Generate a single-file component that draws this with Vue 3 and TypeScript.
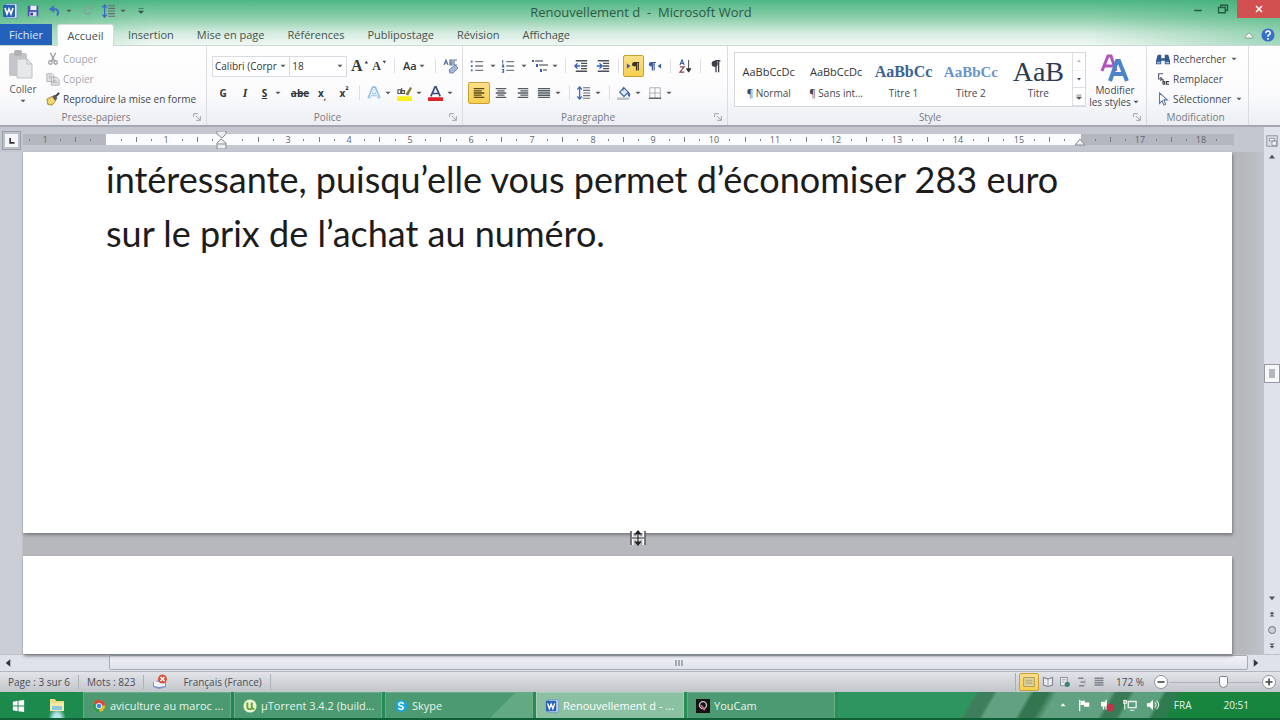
<script setup lang="ts">
import { h, ref } from 'vue'

const glyphs: Record<string, string> = {
  word: '<rect x="4" y="1" width="11" height="14" fill="#e8f0fb" stroke="#6a92c8"/><rect x="1" y="2" width="12" height="12" rx="1" fill="#2b62b5"/><path d="M3 5l2 6 2-5 2 5 2-6" fill="none" stroke="#fff" stroke-width="1.6"/>',
  save: '<path d="M2 2h12v12H2z" fill="#4453b5"/><path d="M5 2h7v5H5z" fill="#e9ebfa"/><path d="M4 9h8v5H4z" fill="#d9dcf0"/><path d="M5 10h3v3H5z" fill="#303a86"/>',
  undo: '<path d="M5 6h4a4 4 0 0 1 1 7" fill="none" stroke="#3f6fc6" stroke-width="2.4"/><path d="M1 6l6-5v9z" fill="#3f6fc6"/>',
  redo: '<path d="M12 9a4.500 4.500 0 1 1-2-5" fill="none" stroke="#7fa898" stroke-width="2.200"/><path d="M8 6h6V1z" fill="#7fa898"/>',
  spacing: '<path d="M3 1v14M0.500 4L3 1l2.500 3M.5 12L3 15l2.500-3" fill="none" stroke="#3a6cc0" stroke-width="1.500"/><path d="M7 2h8M7 5h8M7 8h8M7 11h8M7 14h8" stroke="#666b75" stroke-width="1.400"/>',
  caret: '<path d="M4 6h8l-4 4z" fill="#555"/>',
  customize: '<path d="M4 4h8M4 8h8l-4 4z" fill="#33564a" stroke="#33564a"/>',
  paste: '<rect x="1" y="4" width="18" height="23" rx="2" fill="#c3c5c8"/><rect x="6" y="1" width="8" height="6" rx="2" fill="#b0b2b5"/><path d="M9 10h10l5 5v14H9z" fill="#e6e7e9" stroke="#bfc1c4"/><path d="M19 10v5h5" fill="none" stroke="#bfc1c4"/>',
  cut: '<path d="M5 1l5 10M11 1L6 11" stroke="#9fa2a6" stroke-width="1.600"/><circle cx="5" cy="12" r="2" fill="none" stroke="#9fa2a6" stroke-width="1.500"/><circle cx="11" cy="12" r="2" fill="none" stroke="#9fa2a6" stroke-width="1.500"/>',
  copy: '<path d="M1 2h6l2 2v7H1zM6 6h6l3 3v6H6z" fill="#e4e5e7" stroke="#a9abb0"/><path d="M8 10h4M8 12h5M3 5h3M3 7h2" stroke="#a9abb0"/>',
  brush: '<path d="M1 8l6-3 4 5-4 5-5-1z" fill="#f0cf62" stroke="#a58428"/><path d="M7 5l3-2 3 4-2 3z" fill="#555c68"/><path d="M11 5l4-4" stroke="#3d4046" stroke-width="2.400"/><path d="M3 9l3 4M6 8l3 4" stroke="#fff0a8"/>',
  launch: '<path d="M2 6V2h5M5 5l5 5M10 5v5H5" fill="none" stroke="#a0a3aa" stroke-width="1.200"/>',
  grow: '<path d="M11 5l2-3 2 3z" fill="#345" />',
  shrink: '<path d="M11 2h4l-2 3z" fill="#345"/>',
  clear: '<path d="M1 7l2-5 2 5M2 5h2M7 2v5h2V5H7h2V2zM14 2h-3v5h3" fill="none" stroke="#56709a" stroke-width="1.200"/><path d="M6 12l6-5 3 3-5 5H7z" fill="#a7b5e1" stroke="#7683b8"/>',
  bullets: '<path d="M6 3h9M6 8h9M6 13h9" stroke="#777c84" stroke-width="1.600"/><path d="M1 2h2v2H1zM1 7h2v2H1zM1 12h2v2H1z" fill="#3d5da8"/>',
  numbers: '<path d="M6 3h9M6 8h9M6 13h9" stroke="#777c84" stroke-width="1.600"/><path d="M2 1v4M1 7h2v2H1M1 12h2v3H1" fill="none" stroke="#3d5da8" stroke-width="1.200"/>',
  levels: '<path d="M3 3h8M7 7h9M11 12h4" stroke="#777c84" stroke-width="1.500"/><path d="M0 2h2v2H0zM4 6h2v3H4zM8 11h2v3H8z" fill="#3d5da8"/>',
  outdent: '<path d="M2 2h13M8 5h7M8 8h7M8 11h7M2 14h13" stroke="#4a4f58" stroke-width="1.500"/><path d="M7 8H2M4 5L1 8l3 3" fill="none" stroke="#2f5dbb" stroke-width="1.600"/>',
  indent: '<path d="M2 2h13M8 5h7M8 8h7M8 11h7M2 14h13" stroke="#4a4f58" stroke-width="1.500"/><path d="M1 8h5M4 5l3 3-3 3" fill="none" stroke="#2f5dbb" stroke-width="1.600"/>',
  ltr: '<path d="M1 5l4 3-4 3z" fill="#4b56b0"/><path d="M12 4v9M14 4v9M15 4H9" stroke="#3b3420" stroke-width="1.400"/><circle cx="9.500" cy="6" r="2.500" fill="#3b3420"/>',
  rtl: '<path d="M15 5l-4 3 4 3z" fill="#3d5da8"/><path d="M5 4v9M7 4v9M9 4H3" stroke="#3d5da8" stroke-width="1.400"/><circle cx="3.500" cy="6" r="2.500" fill="#3d5da8"/>',
  sort: '<path d="M1 7l2.500-6L6 7M2 5h3" fill="none" stroke="#3d5da8" stroke-width="1.300"/><path d="M1 9h5l-5 6h5" fill="none" stroke="#98404c" stroke-width="1.300"/><path d="M11 1v13M8.500 11l2.500 4 2.500-4z" stroke="#333" fill="#333"/>',
  pilcrow: '<path d="M8 2v13M11 2v13M13 2H7" stroke="#3d4046" stroke-width="1.500"/><circle cx="6.500" cy="5.500" r="3.500" fill="#3d4046"/>',
  left: '<path d="M2 3h12M2 5.500h9M2 8h12M2 10.500h9M2 13h12" stroke="#5b4a16" stroke-width="1.500"/>',
  center: '<path d="M2 3h12M4 5.500h8M2 8h12M4 10.500h8M2 13h12" stroke="#555a62" stroke-width="1.500"/>',
  right: '<path d="M2 3h12M5 5.500h9M2 8h12M5 10.500h9M2 13h12" stroke="#555a62" stroke-width="1.500"/>',
  justify: '<path d="M1 3h14M1 5.500h14M1 8h14M1 10.500h14M1 13h14" stroke="#555a62" stroke-width="1.600"/>',
  bucket: '<path d="M3 7l5-5 5 5-5 5z" fill="#dfe7f5" stroke="#3c5fa0" stroke-width="1.300"/><path d="M7 5V1M13 7q3 2 1 5-2-1-1-5" fill="#3d6fc4" stroke="#3c5fa0"/><path d="M0 13h14v3H0z" fill="#bfc4cc"/>',
  borders: '<path d="M2 2h12v12H2zM8 2v12M2 8h12" fill="none" stroke="#a3a7ae"/><path d="M1 14h14" stroke="#555a62" stroke-width="1.500"/>',
  effect: '<path d="M2 14L7 2h2l5 12M4 10h8" fill="none" stroke="#8fc0e8" stroke-width="3.400"/><path d="M3 13L7.500 3h1L13 13M5 10h6" fill="none" stroke="#f4faff" stroke-width="1.200"/>',
  marker: '<path d="M0 11h16v5H0z" fill="#f6f21a"/><path d="M1 4h3v4H1zM5 2v6h3V5H5" fill="none" stroke="#555" stroke-width="1.300"/><path d="M9 9l5-8 2 1-4 8z" fill="#8a7a30"/>',
  fontcolor: '<path d="M3 11L7.500 1h1L13 11M5 8h6" fill="none" stroke="#394b80" stroke-width="1.800"/><path d="M0 12h16v4H0z" fill="#e0202c"/>',
  styles: '<path d="M2 17L8 2h3l5 15M4 12h10" fill="none" stroke="#b155bd" stroke-width="3"/><path d="M10 27L17 7h2l8 20M13 20h11" fill="none" stroke="#4b84c9" stroke-width="4"/>',
  find: '<path d="M2 3h4v4h4V3h4l2 7v4h-6v-4H6v4H0v-4z" fill="#33598f"/><path d="M1 11h4v2H1zM11 11h4v2h-4z" fill="#9dbbe2"/>',
  replace: '<path d="M8 2H3v6h4M5 6l2 2-2 2" fill="none" stroke="#555a62" stroke-width="1.300"/><path d="M8 8v6M8 11h2v3H8M15 11h-3v3h3" fill="none" stroke="#3c4048" stroke-width="1.300"/>',
  select: '<path d="M4 1v12l3-3 2 5 2-1-2-5h4z" fill="#fff" stroke="#5975a8" stroke-width="1.200"/>',
  min: '<path d="M3 10h10" stroke="#245b41" stroke-width="2"/>',
  restore: '<path d="M5 6V3h9v7h-3M2 6h9v7H2z" fill="none" stroke="#245b41" stroke-width="1.800"/>',
  close: '<path d="M4 4l8 8M12 4l-8 8" stroke="#fff" stroke-width="2"/>',
  collapse: '<path d="M3 10l5-5 5 5v2H3z" fill="#f5faf8" stroke="#6c8b80"/>',
  help: '<circle cx="8" cy="8" r="7.500" fill="#386fcc"/><path d="M5.500 6q0-2.500 2.500-2.500T10.500 6Q10.500 7.500 8 8.500V10" fill="none" stroke="#fff" stroke-width="1.800"/><path d="M7 11.500h2v2H7z" fill="#fff"/>',
  up: '<path d="M4 10h8L8 5z" fill="#4a4f5a"/>',
  down: '<path d="M4 6h8l-4 5z" fill="#4a4f5a"/>',
  tip: '<path d="M4 10h8L8 5z" fill="#fff"/>',
  back: '<path d="M11 3v10L5 8z" fill="#33363d"/>',
  forward: '<path d="M5 3v10l6-5z" fill="#33363d"/>',
  more: '<path d="M4 5h8M4 8h8l-4 4z" fill="#555" stroke="#555"/>',
  previous: '<path d="M4 8l4-4 4 4zM4 12l4-4 4 4z" fill="#555a66"/>',
  next: '<path d="M4 4l4 4 4-4zM4 8l4 4 4-4z" fill="#555a66"/>',
  browse: '<circle cx="8" cy="8" r="4.500" fill="#cdd1da" stroke="#868b96" stroke-width="1.500"/>',
  ruler: '<path d="M2 2h12v12H2z" fill="#d8dbe2" stroke="#898e99"/><path d="M5 5h6v3H5zM8 8h5v5H8z" fill="#f5f6f8" stroke="#898e99"/>',
  tabstop: '<path d="M5 3v8h7" fill="none" stroke="#333" stroke-width="2.600"/>',
  proof: '<path d="M1 8l6-2 7 2v5l-7 2-6-2z" fill="#7c93c8"/><path d="M2 7l5 1 6-1v5l-6 1-5-1z" fill="#f0f3fb"/><circle cx="10.500" cy="5" r="4.500" fill="#d4543e"/><path d="M8.500 3l4 4M12.500 3l-4 4" stroke="#fff" stroke-width="1.500"/>',
  print: '<path d="M2 3h12v10H2z" fill="#e9dda6" stroke="#9c8d55"/><path d="M4 6h8M4 8h8M4 10h8" stroke="#a99a65"/>',
  read: '<path d="M8 4L2 2v10l6 2 6-2V2z" fill="#eceef2" stroke="#7f848e" stroke-width="1.500"/><path d="M8 4v10" stroke="#7f848e"/>',
  web: '<path d="M2 2h9v11H2z" fill="#e9ebef" stroke="#8b9099" stroke-width="1.300"/><circle cx="11" cy="11" r="3.500" fill="#3c8277"/><path d="M4 5h5M4 8h3" stroke="#8b9099"/>',
  outline: '<path d="M3 3h7M6 8h6M4 13h7" stroke="#7f848e" stroke-width="2"/><path d="M12 4v8" stroke="#a6aab2"/>',
  draft: '<path d="M2 3h12M2 6h12M2 9h12M2 12h12" stroke="#7f848e" stroke-width="1.800"/>',
  minus: '<circle cx="8" cy="8" r="6.500" fill="#fdfdfe" stroke="#8f949e"/><path d="M4.500 8h7" stroke="#444" stroke-width="1.600"/>',
  plus: '<circle cx="8" cy="8" r="6.500" fill="#fdfdfe" stroke="#8f949e"/><path d="M4.500 8h7M8 4.500v7" stroke="#444" stroke-width="1.600"/>',
  start: '<path d="M2 4l5-1v5H2zM8 3l6-1v6H8zM2 9h5v5l-5-1zM8 9h6v6l-6-1z" fill="#fff"/>',
  explorer: '<path d="M1 2h5l1 2h8v4H1z" fill="#f2dd84"/><path d="M1 6h14v8H1z" fill="#f7eaa8"/><path d="M3 9h10v4H3z" fill="#8cc6dc"/>',
  chrome: '<circle cx="8" cy="8" r="7" fill="#e4bd2e"/><path d="M8 8L2 4.500A7 7 0 0 1 15 7z" fill="#dc4437"/><path d="M8 8l1 7A7 7 0 0 1 2 4.500z" fill="#2f9c55"/><circle cx="8" cy="8" r="3.200" fill="#4a86e0" stroke="#fff"/>',
  torrent: '<circle cx="8" cy="8" r="7.500" fill="#e9f5cf"/><path d="M5 4v5q0 3 3 2.500T10 9V4M10 9q0 3 3 2" fill="none" stroke="#65a83a" stroke-width="2.200"/>',
  skype: '<circle cx="8" cy="8" r="7" fill="#17a6e2"/><path d="M11 5.500Q8 3 6 5t2 3 2 3-5-.5" fill="none" stroke="#fff" stroke-width="1.700"/>',
  youcam: '<path d="M0 0h16v16H0z" fill="#121212"/><circle cx="8" cy="7" r="4" fill="none" stroke="#c9c9c9" stroke-width="1.600"/><path d="M6 7l4 6" stroke="#dd5d91" stroke-width="2"/>',
  flag: '<path d="M3 2v13" stroke="#fff" stroke-width="1.500"/><path d="M4 3h5v2h5v5H8V8H4z" fill="#fff"/>',
  plug: '<path d="M2 5h5v4H2zM7 2v11M4 9v4" fill="#fff" stroke="#fff" stroke-width="1.500"/><circle cx="12" cy="11" r="4.500" fill="#c03245"/>',
  network: '<path d="M6 4h9v7H6z" fill="none" stroke="#e9f3ed" stroke-width="1.500"/><path d="M2 2v11M0 3h4v3H0zM8 14h5" fill="none" stroke="#e9f3ed" stroke-width="1.300"/>',
  sound: '<path d="M1 6h3l4-4v12l-4-4H1z" fill="#fff"/><path d="M10 5q3 3 0 6M12 3q5 5 0 10" fill="none" stroke="#d4e8db" stroke-width="1.300"/>',
  pointer: '<path d="M2 1v14M14 1v14M2 8h12M8 1v14" stroke="#fff" stroke-width="3"/><path d="M1 1v14M15 1v14M2 8h12M8 2v12M5.500 4L8 1l2.500 3zM5.500 12L8 15l2.500-3z" stroke="#222" fill="#222" stroke-width="1.200"/>',
}

const Icon = (p: { name: string; size?: number; box?: number }) =>
  h('svg', {
    width: p.size ?? 14,
    height: p.size ?? 14,
    viewBox: `0 0 ${p.box ?? 16} ${p.box ?? 16}`,
    innerHTML: glyphs[p.name],
    'aria-hidden': 'true',
  })
Icon.props = ['name', 'size', 'box']

const tabs = ['Insertion', 'Mise en page', 'Références', 'Publipostage', 'Révision', 'Affichage']

const styles = [
  { sample: 'AaBbCcDc', label: '¶ Normal', kind: 'plain' },
  { sample: 'AaBbCcDc', label: '¶ Sans int...', kind: 'plain' },
  { sample: 'AaBbCc', label: 'Titre 1', kind: 'h1' },
  { sample: 'AaBbCc', label: 'Titre 2', kind: 'h2' },
  { sample: 'AaB', label: 'Titre', kind: 'title' },
]

const tasks = [
  { icon: 'chrome', label: 'aviculture au maroc ...' },
  { icon: 'torrent', label: 'µTorrent 3.4.2  (build...' },
  { icon: 'skype', label: 'Skype', sheen: true },
  { icon: 'word', label: 'Renouvellement d - ...', active: true },
  { icon: 'youcam', label: 'YouCam' },
]

const cm = 61
const origin = 83
const marks = Array.from({ length: 79 }, (_, i) => i - 5)
  .map((q) => ({ x: origin + Math.floor((q * cm) / 4 - q / 32), q }))
  .filter((m) => m.x > 4 && m.x < 1206 && m.q !== 0 && m.q !== 8 && m.q !== 64)

const font = ref('Calibri (Corpr')
const fontSize = ref('18')
const zoom = ref(60)
</script>

<template>
  <div class="window">
    <header class="top">
      <div class="titlebar">
        <div class="quick">
          <Icon name="word" :size="16" />
          <button aria-label="Enregistrer"><Icon name="save" /></button>
          <button class="drop" aria-label="Annuler"><Icon name="undo" /><Icon name="caret" :size="10" /></button>
          <button aria-label="Rétablir"><Icon name="redo" :size="12" /></button>
          <button class="drop" aria-label="Interligne"><Icon name="spacing" /><Icon name="caret" :size="10" /></button>
          <button aria-label="Personnaliser"><Icon name="customize" :size="10" /></button>
        </div>
        <h1>Renouvellement d&nbsp; -&nbsp; Microsoft Word</h1>
        <div class="controls">
          <button aria-label="Réduire"><Icon name="min" :size="12" /></button>
          <button aria-label="Restaurer"><Icon name="restore" :size="12" /></button>
          <button class="close" aria-label="Fermer"><Icon name="close" :size="12" /></button>
        </div>
      </div>
      <nav class="tabs">
        <button class="file">Fichier</button>
        <button class="current">Accueil</button>
        <button v-for="t in tabs" :key="t">{{ t }}</button>
        <span class="grow"></span>
        <button class="mini" aria-label="Réduire le ruban"><Icon name="collapse" :size="12" /></button>
        <button class="mini" aria-label="Aide"><Icon name="help" /></button>
      </nav>
    </header>

    <div class="ribbon">
      <section class="group clipboard">
        <div class="body">
          <button class="paste" disabled><Icon name="paste" :size="30" :box="30" /><span>Coller</span><Icon name="caret" :size="10" /></button>
          <div class="stack">
            <button class="off" disabled><Icon name="cut" />Couper</button>
            <button class="off" disabled><Icon name="copy" />Copier</button>
            <button><Icon name="brush" />Reproduire la mise en forme</button>
          </div>
        </div>
        <footer><span>Presse-papiers</span><Icon name="launch" :size="10" :box="12" /></footer>
      </section>

      <section class="group font">
        <div class="body rows">
          <div class="row">
            <label class="pick face"><select v-model="font" aria-label="Police"><option>Calibri (Corpr</option></select><Icon name="caret" :size="10" /></label>
            <label class="pick pt"><select v-model="fontSize" aria-label="Taille"><option>18</option></select><Icon name="caret" :size="10" /></label>
            <button class="tool letter big">A<Icon name="grow" /></button>
            <button class="tool letter">A<Icon name="shrink" /></button>
            <span class="sep"></span>
            <button class="tool wide aa">Aa<Icon name="caret" :size="10" /></button>
            <span class="sep"></span>
            <button class="tool" aria-label="Effacer la mise en forme"><Icon name="clear" :size="16" /></button>
          </div>
          <div class="row">
            <button class="tool"><b>G</b></button>
            <button class="tool"><i>I</i></button>
            <button class="tool wide"><u>S</u><Icon name="caret" :size="10" /></button>
            <button class="tool"><s>abe</s></button>
            <button class="tool"><b>x<sub>,</sub></b></button>
            <button class="tool"><b>x<sup>²</sup></b></button>
            <span class="sep"></span>
            <button class="tool drop30" aria-label="Effets de texte"><Icon name="effect" /><Icon name="caret" :size="10" /></button>
            <button class="tool drop30" aria-label="Surlignage"><Icon name="marker" :size="15" /><Icon name="caret" :size="10" /></button>
            <button class="tool drop30" aria-label="Couleur de police"><Icon name="fontcolor" :size="15" /><Icon name="caret" :size="10" /></button>
          </div>
        </div>
        <footer><span>Police</span><Icon name="launch" :size="10" :box="12" /></footer>
      </section>

      <section class="group para">
        <div class="body rows">
          <div class="row">
            <button class="tool drop32" aria-label="Puces"><Icon name="bullets" /><Icon name="caret" :size="10" /></button>
            <button class="tool drop32" aria-label="Numérotation"><Icon name="numbers" /><Icon name="caret" :size="10" /></button>
            <button class="tool drop30" aria-label="Liste à plusieurs niveaux"><Icon name="levels" :size="16" /><Icon name="caret" :size="10" /></button>
            <span class="sep"></span>
            <button class="tool" aria-label="Diminuer le retrait"><Icon name="outdent" /></button>
            <button class="tool" aria-label="Augmenter le retrait"><Icon name="indent" /></button>
            <span class="sep"></span>
            <button class="tool on" aria-label="De gauche à droite"><Icon name="ltr" /></button>
            <button class="tool" aria-label="De droite à gauche"><Icon name="rtl" /></button>
            <span class="sep"></span>
            <button class="tool" aria-label="Trier"><Icon name="sort" /></button>
            <span class="sep"></span>
            <button class="tool" aria-label="Afficher tout"><Icon name="pilcrow" /></button>
          </div>
          <div class="row">
            <button class="tool on" aria-label="Aligner à gauche"><Icon name="left" /></button>
            <button class="tool" aria-label="Centrer"><Icon name="center" /></button>
            <button class="tool" aria-label="Aligner à droite"><Icon name="right" /></button>
            <button class="tool drop30" aria-label="Justifier"><Icon name="justify" /><Icon name="caret" :size="10" /></button>
            <span class="sep"></span>
            <button class="tool drop30" aria-label="Interligne"><Icon name="spacing" /><Icon name="caret" :size="10" /></button>
            <span class="sep"></span>
            <button class="tool drop30" aria-label="Trame de fond"><Icon name="bucket" /><Icon name="caret" :size="10" /></button>
            <button class="tool drop30" aria-label="Bordures"><Icon name="borders" /><Icon name="caret" :size="10" /></button>
          </div>
        </div>
        <footer><span>Paragraphe</span><Icon name="launch" :size="10" :box="12" /></footer>
      </section>

      <section class="group style">
        <div class="body">
          <div class="gallery">
            <button v-for="(s, i) in styles" :key="i" class="card">
              <span class="sample" :class="s.kind">{{ s.sample }}</span>
              <span>{{ s.label }}</span>
            </button>
            <div class="scroller">
              <button aria-label="Précédent" disabled><Icon name="up" :size="8" /></button>
              <button aria-label="Suivant"><Icon name="down" :size="8" /></button>
              <button aria-label="Autres"><Icon name="more" :size="10" /></button>
            </div>
          </div>
          <button class="modify"><Icon name="styles" :size="30" :box="30" /><span>Modifier</span><span>les styles<Icon name="caret" :size="10" /></span></button>
        </div>
        <footer><span>Style</span><Icon name="launch" :size="10" :box="12" /></footer>
      </section>

      <section class="group edit">
        <div class="body">
          <div class="stack">
            <button><Icon name="find" />Rechercher<Icon name="caret" :size="10" /></button>
            <button><Icon name="replace" />Remplacer</button>
            <button><Icon name="select" />Sélectionner<Icon name="caret" :size="10" /></button>
          </div>
        </div>
        <footer><span>Modification</span></footer>
      </section>
    </div>

    <div class="work">
      <div class="canvas">
        <div class="rulerbar">
          <button class="corner" aria-label="Tabulation"><Icon name="tabstop" :size="10" /></button>
          <div class="ruler">
            <svg width="1211" height="18" aria-label="Règle">
              <rect x="0" y="3" width="1211" height="11" fill="#b4b7bf" />
              <rect x="83" y="3" width="975" height="11" fill="#fbfcfd" />
              <g v-for="m in marks" :key="m.q">
                <text v-if="m.q % 4 === 0" :x="m.x" y="12" text-anchor="middle">{{ Math.abs(m.q / 4) }}</text>
                <rect v-else-if="m.q % 2 === 0" :x="m.x" y="6" width="1" height="5" fill="#777c86" />
                <rect v-else :x="m.x" y="8" width="1" height="2" fill="#777c86" />
              </g>
              <path d="M194 0h9v3l-4 4-5-4zM194 12l4-4 5 4v6h-9zM194 13h9" fill="#eceef2" stroke="#868b95" />
              <path d="M1052 14l5-6 5 6z" fill="#eceef2" stroke="#868b95" />
            </svg>
          </div>
        </div>
        <main class="document">
          <article class="page first">
            <p>intéressante, puisqu’elle vous permet d’économiser 283 euro<br />sur le prix de l’achat au numéro.</p>
            <Icon class="pointer" name="pointer" :size="16" />
          </article>
          <article class="page second"></article>
        </main>
      </div>
      <aside class="vscroll">
        <button aria-label="Règle"><Icon name="ruler" /></button>
        <button aria-label="Haut"><Icon name="up" :size="12" /></button>
        <div class="track"><div class="thumb"></div></div>
        <button aria-label="Bas"><Icon name="down" :size="12" /></button>
        <button aria-label="Page précédente"><Icon name="previous" :size="10" /></button>
        <button aria-label="Parcourir"><Icon name="browse" :size="12" /></button>
        <button aria-label="Page suivante"><Icon name="next" :size="10" /></button>
      </aside>
    </div>

    <div class="hscroll">
      <button aria-label="Gauche"><Icon name="back" :size="12" /></button>
      <div class="htrack"><div class="hthumb"><i></i><i></i><i></i></div></div>
      <button aria-label="Droite"><Icon name="forward" :size="12" /></button>
    </div>

    <div class="status">
      <span class="cell">Page : 3 sur 6</span>
      <span class="cell">Mots : 823</span>
      <span class="cell lang"><Icon name="proof" :size="16" />Français (France)</span>
      <span class="grow"></span>
      <div class="views">
        <button class="on" aria-label="Page"><Icon name="print" /></button>
        <button aria-label="Lecture"><Icon name="read" :size="12" /></button>
        <button aria-label="Web"><Icon name="web" :size="12" /></button>
        <button aria-label="Plan"><Icon name="outline" :size="12" /></button>
        <button aria-label="Brouillon"><Icon name="draft" :size="12" /></button>
      </div>
      <span class="percent">172 %</span>
      <button aria-label="Zoom arrière"><Icon name="minus" :size="16" /></button>
      <input v-model="zoom" type="range" min="0" max="100" aria-label="Zoom" />
      <button aria-label="Zoom avant"><Icon name="plus" :size="16" /></button>
    </div>

    <div class="taskbar">
      <button class="pin" aria-label="Démarrer"><Icon name="start" :size="15" /></button>
      <button class="pin glow" aria-label="Explorateur"><Icon name="explorer" :size="16" /></button>
      <button v-for="t in tasks" :key="t.label" class="task" :class="{ active: t.active, sheen: t.sheen }"><Icon :name="t.icon" :size="14" /><span>{{ t.label }}</span></button>
      <div class="tray">
        <Icon name="tip" :size="10" />
        <Icon name="flag" /><Icon name="plug" /><Icon name="network" /><Icon name="sound" />
        <span class="fra">FRA</span>
        <time>20:51</time>
      </div>
    </div>
  </div>
</template>

<style>
body { margin: 0; }
</style>

<style scoped>
* { box-sizing: border-box; }
.window { display: flex; flex-direction: column; height: 100vh; overflow: hidden; font: 10px/14px "Open Sans", "Noto Sans", sans-serif; color: #45484e; }
button { display: flex; align-items: center; justify-content: center; margin: 0; padding: 0; border: 0; background: none; font: inherit; color: inherit; white-space: nowrap; }
svg { display: block; flex: none; }
.grow { flex: 1; }

.top { background: linear-gradient(90deg, #35aa6c66, #35aa6c00 12%, #35aa6c00 85%, #35aa6c66), linear-gradient(#4fb685, #8fd0ad 40%, #d5ece0 72%, #f3f9f6); }
.titlebar { display: flex; align-items: flex-start; height: 24px; }
.quick, .controls { flex: 1; display: flex; align-items: center; }
.quick { height: 22px; gap: 8px; padding-left: 2px; }
.quick .drop { gap: 2px; }
h1 { margin: 0; font-size: 13px; line-height: 24px; font-weight: 400; color: #2c5a45; }
.controls { justify-content: flex-end; align-items: flex-start; }
.controls button { width: 25px; height: 18px; }
.controls .close { width: 43px; background: #d2504f; margin-left: 2px; }
.tabs { display: flex; height: 22px; padding-right: 2px; border-bottom: 1px solid #cbd9d5; color: #47524f; font-size: 11px; }
.tabs button { padding: 0 11px; margin-left: 1px; }
.tabs .file { width: 52px; padding: 0; margin: 0 5px 0 0; background: #2361bd; color: #dce8fa; }
.tabs .current { width: 57px; margin: 0 2px -1px 0; padding: 0; background: #fdfefe; border: 1px solid #d0dedb; border-bottom: 0; border-radius: 3px 3px 0 0; }
.tabs .mini { padding: 0 3px; margin: 0; }

.ribbon { display: flex; height: 81px; background: linear-gradient(#fff, #fbfbfd 60%, #eceef3); border-bottom: 2px solid #a5a8b0; }
.group { display: flex; flex-direction: column; border-right: 1px solid #dadce1; }
.clipboard { width: 207px; }
.font { width: 256px; }
.para { width: 265px; }
.style { width: 419px; }
.edit { width: 102px; }
.body { flex: 1; display: flex; padding-top: 3px; }
.group footer { display: flex; align-items: center; height: 16px; padding-right: 4px; color: #777b83; }
.group footer span { flex: 1; text-align: center; }
.paste { flex-direction: column; width: 46px; justify-content: flex-start; }
.paste span { margin-top: 3px; color: #55585e; }
.stack { display: flex; flex-direction: column; justify-content: space-between; align-items: flex-start; }
.stack button { height: 20px; gap: 3px; }
.stack .off { color: #a4a6aa; }
.rows { flex-direction: column; gap: 5px; padding-left: 5px; padding-top: 9px; }
.row { display: flex; align-items: center; height: 22px; }
.tool { width: 22px; height: 22px; color: #33363c; }
.wide { width: 33px; }
.drop30 { width: 31px; gap: 2px; }
.drop32 { width: 32px; gap: 4px; }
.row .sep { width: 1px; height: 14px; margin: 0 4px; background: #dcdee3; }
.on { background: linear-gradient(#fbe08a, #f8cf4e); border: 1px solid #c8a135; border-radius: 2px; }
.pick { display: flex; align-items: center; height: 21px; border: 1px solid #d8dbe1; background: #fff; padding-right: 1px; }
.face { width: 79px; }
.pt { width: 58px; margin-left: -1px; }
select { flex: 1; min-width: 0; width: 0; appearance: none; border: 0; padding: 0 0 0 2px; background: none; font: inherit; color: #333; }
.letter { font: bold 12px/20px "Liberation Serif", serif; width: 20px; }
.letter svg { margin-left: -8px; }
.big { font-size: 16px; margin-left: 3px; }
.aa { font-weight: 600; font-size: 11px; }
.tool i { font: italic bold 12px "Liberation Serif", serif; }
.tool u { font-weight: 700; margin-right: 6px; }
.tool s, .tool b { font-weight: 700; }
.tool sub, .tool sup { font-size: 8px; line-height: 0; }

.gallery { display: flex; width: 352px; height: 55px; margin: 3px 0 0 6px; border: 1px solid #d5d8de; background: #fff; }
.card { flex: 1; min-width: 0; flex-direction: column; justify-content: flex-end; padding: 0 3px 6px; }
.sample { height: 28px; font-size: 11px; line-height: 28px; color: #333; }
.sample.h1 { font: bold 16px/28px "Liberation Serif", serif; color: #3a6296; }
.sample.h2 { font: bold 15px/28px "Liberation Serif", serif; color: #6894cb; }
.sample.title { font: 28px/28px "Liberation Serif", serif; color: #2b3d52; }
.scroller { display: flex; flex-direction: column; width: 13px; border-left: 1px solid #dcdfe4; }
.scroller button { flex: 1; border-bottom: 1px solid #dcdfe4; }
.scroller button:disabled { opacity: 0.4; }
.modify { flex: 1; flex-direction: column; line-height: 12px; padding: 4px 2px 0 0; }
.modify span { display: flex; align-items: center; }
.edit .stack { padding-left: 9px; }

.work { flex: 1; display: flex; min-height: 0; }
.canvas { flex: 1; min-width: 0; display: flex; flex-direction: column; background: #c4c7cf; }
.rulerbar { display: flex; height: 25px; align-items: center; }
.corner { width: 19px; height: 19px; margin: 2px 2px 0; background: #f5f6f8; border: 3px solid #bcc0c8; outline: 1px solid #999ea8; outline-offset: -1px; }
.ruler { flex: 1; overflow: hidden; padding-top: 1px; }
.ruler text { font-size: 9px; fill: #60646d; }
.document { flex: 1; min-height: 0; display: flex; flex-direction: column; gap: 23px; padding-right: 32px; background: linear-gradient(90deg, #cbced7 22px, #b6b8bc 23px, #b6b8bc calc(100% - 20px), #bfc3cc); }
.page { position: relative; margin-left: 23px; background: #fff; box-shadow: 1px 2px 3px #777a80; }
.first { flex: 381; }
.second { flex: 98; }
.page p { margin: 0; padding-left: 83px; font: 36px/54px Lato, sans-serif; color: #1c1c1c; white-space: nowrap; }
.pointer { position: absolute; left: 50%; bottom: -13px; margin-left: 2px; }

.vscroll { width: 16px; display: flex; flex-direction: column; align-items: center; background: #dfe2eb; padding-top: 6px; }
.vscroll button { width: 16px; height: 16px; }
.track { flex: 1; width: 100%; display: flex; flex-direction: column; padding-top: 199px; }
.thumb { height: 19px; border: 1px solid #959aa5; background: #b3b6bd; box-shadow: inset 0 0 0 4px #f6f7f9; }
.hscroll { display: flex; height: 17px; background: #dfe2ea; border-top: 1px solid #bfc2c9; padding-right: 16px; }
.hscroll button { width: 16px; }
.htrack { flex: 1; padding-left: 93px; }
.hthumb { display: flex; align-items: center; justify-content: center; gap: 1px; height: 15px; border: 1px solid #a8acb5; border-radius: 2px; background: linear-gradient(#f1f3f8, #dfe2ea); }
.hthumb i { width: 2px; height: 6px; background: #a5a9b2; }

.status { display: flex; align-items: center; height: 21px; padding-right: 3px; background: linear-gradient(#e2e4e9, #c2c5ca); border-top: 1px solid #b4b7bf; color: #4b4e55; }
.cell { padding: 0 8px; border-right: 1px solid #aeb1b8; }
.lang { display: flex; align-items: center; gap: 15px; }
.views { display: flex; gap: 1px; padding-left: 3px; border-left: 1px solid #a9acb3; }
.views button { width: 16px; height: 18px; }
.views .on { width: 20px; }
.percent { width: 46px; text-align: center; }
.status input { width: 92px; height: 16px; margin: 0; appearance: none; background: linear-gradient(#b0b4bc, #b0b4bc) center / 100% 1px no-repeat; }
.status input::-webkit-slider-thumb { appearance: none; width: 9px; height: 12px; border: 1px solid #7f848e; border-radius: 2px 2px 5px 5px; background: #fafbfc; }

.taskbar { display: flex; height: 28px; gap: 3px; border-bottom: 2px solid #0f5f37; background: linear-gradient(90deg, #1c8a4d, #2b8f58 70%, #45946c); color: #e8f4ec; font-size: 11px; }
.pin { width: 36px; }
.glow { margin-right: 5px; background: radial-gradient(ellipse at 50% 110%, #b7e6ee 0 4px, transparent 9px); }
.task { flex: 0 1 148px; min-width: 0; justify-content: flex-start; gap: 4px; padding-left: 8px; background: #4b9a71; border: 1px solid #68ad88; border-bottom: 0; }
.task.sheen { background: linear-gradient(135deg, #4b9a71 75%, #63aa83 76%); }
.task.active { background: #8bc1a2; border-color: #a5d1b7; color: #fff; }
.tray { flex: 1; display: flex; align-items: center; justify-content: flex-end; gap: 9px; padding-right: 31px; font-size: 10px; background: linear-gradient(120deg, #2f9560 0 30%, #3f7d5c 31% 34%, #62a181 35% 42%, #32754e 43% 46%, #62a181 48% 60%, #3a7a55 61% 64%, #5b9f7c 65% 71%, #2f7a4f 72% 74%, #18853f 76%); }
.fra { margin: 0 23px 0 5px; }
</style>
